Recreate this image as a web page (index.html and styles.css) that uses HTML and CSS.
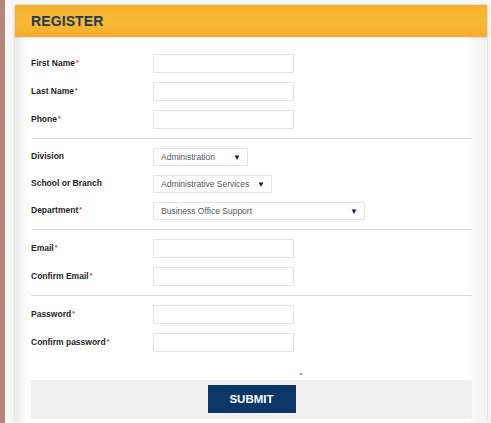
FILE: index.html
```html
<!DOCTYPE html>
<html lang="en">
<head>
<meta charset="utf-8">
<title>Register</title>
<link rel="stylesheet" href="styles.css">
</head>
<body>
<div class="page">
  <div class="strip"></div>
  <div class="gutter"></div>
  <main class="card">
    <header class="card-head"><h1>REGISTER</h1></header>
    <form class="card-body">
      <section class="group first">
        <div class="row"><label>First Name<span class="req">*</span></label><input class="field" type="text"></div>
        <div class="row"><label>Last Name<span class="req">*</span></label><input class="field" type="text"></div>
        <div class="row"><label>Phone<span class="req">*</span></label><input class="field" type="text"></div>
      </section>
      <section class="group">
        <div class="row sel"><label>Division</label><div class="select w-div"><span>Administration</span><span class="arrow">&#9660;</span></div></div>
        <div class="row sel"><label>School or Branch</label><div class="select w-school"><span>Administrative Services</span><span class="arrow">&#9660;</span></div></div>
        <div class="row sel"><label>Department<span class="req">*</span></label><div class="select w-dept"><span>Business Office Support</span><span class="arrow">&#9660;</span></div></div>
      </section>
      <section class="group">
        <div class="row"><label>Email<span class="req">*</span></label><input class="field" type="text"></div>
        <div class="row"><label>Confirm Email<span class="req">*</span></label><input class="field" type="text"></div>
      </section>
      <section class="group last">
        <div class="row"><label>Password<span class="req">*</span></label><input class="field" type="password"></div>
        <div class="row"><label>Confirm password<span class="req">*</span></label><input class="field" type="password"></div>
      </section>
      <div class="spacer"><span class="dot"></span></div>
      <div class="actions"><button type="button" class="submit">SUBMIT</button></div>
    </form>
  </main>
</div>
</body>
</html>
```

FILE: styles.css
```css
* { box-sizing: border-box; }

html, body {
  margin: 0;
  padding: 0;
  height: 100%;
  overflow: hidden;
}

body {
  background: #f8f8f8;
  font-family: "Liberation Sans", Arial, sans-serif;
  color: #222;
}

.page {
  display: flex;
  height: 100%;
}

.strip {
  width: 5px;
  flex: none;
  background: #b5877c;
}

.gutter {
  width: 10px;
  flex: none;
  background: #f7f7f7;
}

.card {
  width: 472px;
  flex: none;
  margin-top: 5px;
  background: linear-gradient(to right, #ececec 0, #fbfbfb 10px, #fff 16px, #fff calc(100% - 20px), #f1f1f1 100%);
  box-shadow: 0 0 3px rgba(0, 0, 0, 0.18);
}

.card-head {
  height: 32px;
  background: linear-gradient(to bottom, #f5b12c, #f8b934 50%, #f2ae2a);
  box-shadow: 0 1px 2px rgba(0, 0, 0, 0.12);
  display: flex;
  align-items: center;
  padding-left: 16px;
}

.card-head h1 {
  margin: 0;
  font-size: 14px;
  font-weight: bold;
  color: #1c3a58;
  letter-spacing: 0.1px;
}

.card-body {
  padding: 0 15px 0 16px;
}

.group {
  padding: 9px 0;
  border-bottom: 1px solid #dcdcdc;
}

.group.first { padding-top: 17px; }
.group.last { border-bottom: none; padding-bottom: 0; }

.row {
  display: flex;
  align-items: center;
  height: 19px;
  margin-bottom: 9px;
}

.row:last-child { margin-bottom: 0; }
.row.sel { height: 18px; }

.row label {
  width: 122px;
  flex: none;
  font-size: 8.5px;
  font-weight: bold;
  color: #1e1e1e;
  margin-top: -2px;
}

.req {
  color: #e53935;
  font-size: 7px;
  margin-left: 1px;
  position: relative;
  top: -1px;
}

.field {
  width: 141px;
  height: 19px;
  border: 1px solid #e4e4e4;
  background: #fff;
  margin: 0;
  padding: 0 6px;
  outline: none;
}

.select {
  height: 18px;
  border: 1px solid #e4e4e4;
  background: #fff;
  display: flex;
  align-items: center;
  justify-content: space-between;
  padding: 0 6px 0 7px;
  font-size: 8.5px;
  color: #555;
}

.select .arrow {
  font-size: 8px;
  color: #222;
}

.w-div { width: 95px; }
.w-school { width: 119px; }
.w-dept { width: 212px; }

.spacer {
  height: 28px;
  position: relative;
}

.dot {
  position: absolute;
  left: 269px;
  top: 21px;
  width: 2px;
  height: 2px;
  border-radius: 50%;
  background: #5a5aff;
}

.actions {
  height: 39px;
  background: #f0f0f0;
  display: flex;
  justify-content: center;
  padding-top: 5px;
}

.submit {
  width: 88px;
  height: 28px;
  border: none;
  background: #0b3868;
  color: #fff;
  font-family: "Liberation Sans", Arial, sans-serif;
  font-size: 11.5px;
  font-weight: bold;
  padding: 0;
}
```
